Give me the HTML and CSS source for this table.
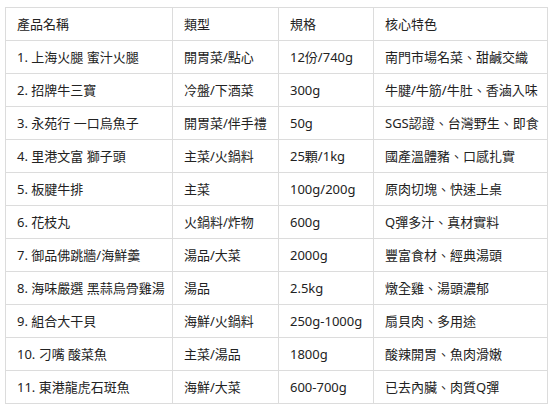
FILE: index.html
```html
<!DOCTYPE html>
<html lang="zh-Hant">
<head>
<meta charset="utf-8">
<title>產品列表</title>
<link rel="stylesheet" href="styles.css">
</head>
<body>
<table class="products">
  <colgroup>
    <col class="c-name">
    <col class="c-type">
    <col class="c-spec">
    <col class="c-feat">
  </colgroup>
  <thead>
    <tr><th>產品名稱</th><th>類型</th><th>規格</th><th>核心特色</th></tr>
  </thead>
  <tbody>
    <tr><td>1. 上海火腿 蜜汁火腿</td><td>開胃菜/點心</td><td>12份/740g</td><td>南門市場名菜、甜鹹交織</td></tr>
    <tr><td>2. 招牌牛三寶</td><td>冷盤/下酒菜</td><td>300g</td><td>牛腱/牛筋/牛肚、香滷入味</td></tr>
    <tr><td>3. 永苑行 一口烏魚子</td><td>開胃菜/伴手禮</td><td>50g</td><td>SGS認證、台灣野生、即食</td></tr>
    <tr><td>4. 里港文富 獅子頭</td><td>主菜/火鍋料</td><td>25顆/1kg</td><td>國產溫體豬、口感扎實</td></tr>
    <tr><td>5. 板腱牛排</td><td>主菜</td><td>100g/200g</td><td>原肉切塊、快速上桌</td></tr>
    <tr><td>6. 花枝丸</td><td>火鍋料/炸物</td><td>600g</td><td>Q彈多汁、真材實料</td></tr>
    <tr><td>7. 御品佛跳牆/海鮮羹</td><td>湯品/大菜</td><td>2000g</td><td>豐富食材、經典湯頭</td></tr>
    <tr><td>8. 海味嚴選 黑蒜烏骨雞湯</td><td>湯品</td><td>2.5kg</td><td>燉全雞、湯頭濃郁</td></tr>
    <tr><td>9. 組合大干貝</td><td>海鮮/火鍋料</td><td>250g-1000g</td><td>扇貝肉、多用途</td></tr>
    <tr><td>10. 刁嘴 酸菜魚</td><td>主菜/湯品</td><td>1800g</td><td>酸辣開胃、魚肉滑嫩</td></tr>
    <tr><td>11. 東港龍虎石斑魚</td><td>海鮮/大菜</td><td>600-700g</td><td>已去內臟、肉質Q彈</td></tr>
  </tbody>
</table>
</body>
</html>
```
FILE: styles.css
```css
html, body {
  margin: 0;
  padding: 0;
  background: #ffffff;
}
body {
  padding: 7px 0 0 5px;
  font-family: "Noto Sans", "Noto Sans CJK TC", sans-serif;
  font-size: 13px;
  color: #222222;
}
.products {
  border-collapse: collapse;
  table-layout: fixed;
  width: 542px;
}
.c-name { width: 167px; }
.c-type { width: 106px; }
.c-spec { width: 95px; }
.c-feat { width: 174px; }
.products th,
.products td {
  border: 1px solid #dcdcdc;
  padding: 8px 11px;
  line-height: 16px;
  height: 16px;
  text-align: left;
  font-weight: normal;
  white-space: nowrap;
  overflow: hidden;
}
```
